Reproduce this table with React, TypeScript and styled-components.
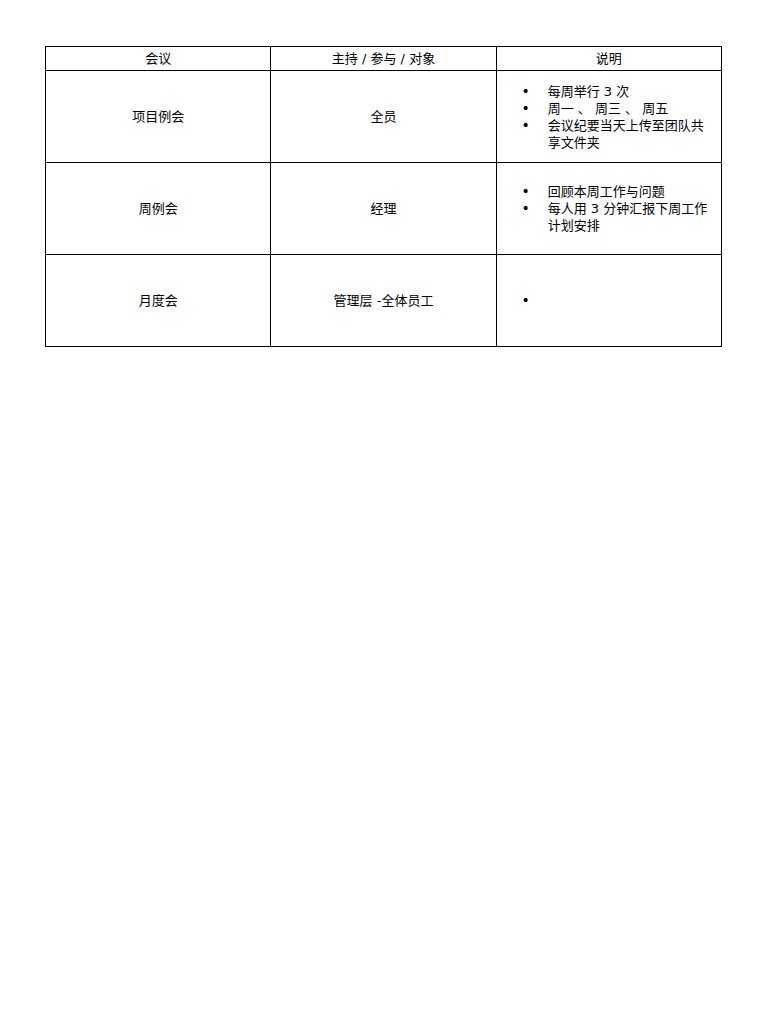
import styled, { createGlobalStyle } from 'styled-components';

const GlobalStyle = createGlobalStyle`
    body {
        margin: 0;
        background: #ffffff;
        color: #000000;
        font-family: 'DejaVu Sans', 'Noto Sans CJK SC', sans-serif;
        font-size: 13px;
        line-height: 17px;
    }
`;

const Page = styled.div`
    padding: 46px 46px 0 45px;
`;

const Table = styled.table`
    width: 100%;
    border-collapse: collapse;
    table-layout: fixed;
`;

const HeadCell = styled.th`
    border: 1px solid #000000;
    font-weight: normal;
    text-align: center;
    padding: 3px 10px;
`;

const Cell = styled.td<{ $list?: boolean }>`
    border: 1px solid #000000;
    height: 92px;
    box-sizing: border-box;
    padding: ${(props) => (props.$list ? '0 8px 0 12px' : '0 10px')};
    vertical-align: middle;
    text-align: ${(props) => (props.$list ? 'left' : 'center')};
`;

const Notes = styled.ul`
    margin: 0;
    padding-left: 39px;

    & li::marker {
        content: '•\u00a0\u00a0\u00a0\u00a0';
        font-family: 'DejaVu Sans', sans-serif;
        font-size: 14px;
    }
`;

type Meeting = {
    name: string;
    owner: string;
    notes: string[];
};

const meetings: Meeting[] = [
    {
        name: '项目例会',
        owner: '全员',
        notes: ['每周举行 3 次', '周一 、 周三 、 周五', '会议纪要当天上传至团队共享文件夹'],
    },
    {
        name: '周例会',
        owner: '经理',
        notes: ['回顾本周工作与问题', '每人用 3 分钟汇报下周工作计划安排'],
    },
    {
        name: '月度会',
        owner: '管理层 -全体员工',
        notes: [''],
    },
];

export default function App() {
    return (
        <>
            <GlobalStyle />
            <Page>
                <Table>
                    <thead>
                        <tr>
                            <HeadCell>会议</HeadCell>
                            <HeadCell>主持 / 参与 / 对象</HeadCell>
                            <HeadCell>说明</HeadCell>
                        </tr>
                    </thead>
                    <tbody>
                        {meetings.map((meeting, i) => (
                            <tr key={i}>
                                <Cell>{meeting.name}</Cell>
                                <Cell>{meeting.owner}</Cell>
                                <Cell $list>
                                    <Notes>
                                        {meeting.notes.map((note, j) => (
                                            <li key={j}>{note}</li>
                                        ))}
                                    </Notes>
                                </Cell>
                            </tr>
                        ))}
                    </tbody>
                </Table>
            </Page>
        </>
    );
}
